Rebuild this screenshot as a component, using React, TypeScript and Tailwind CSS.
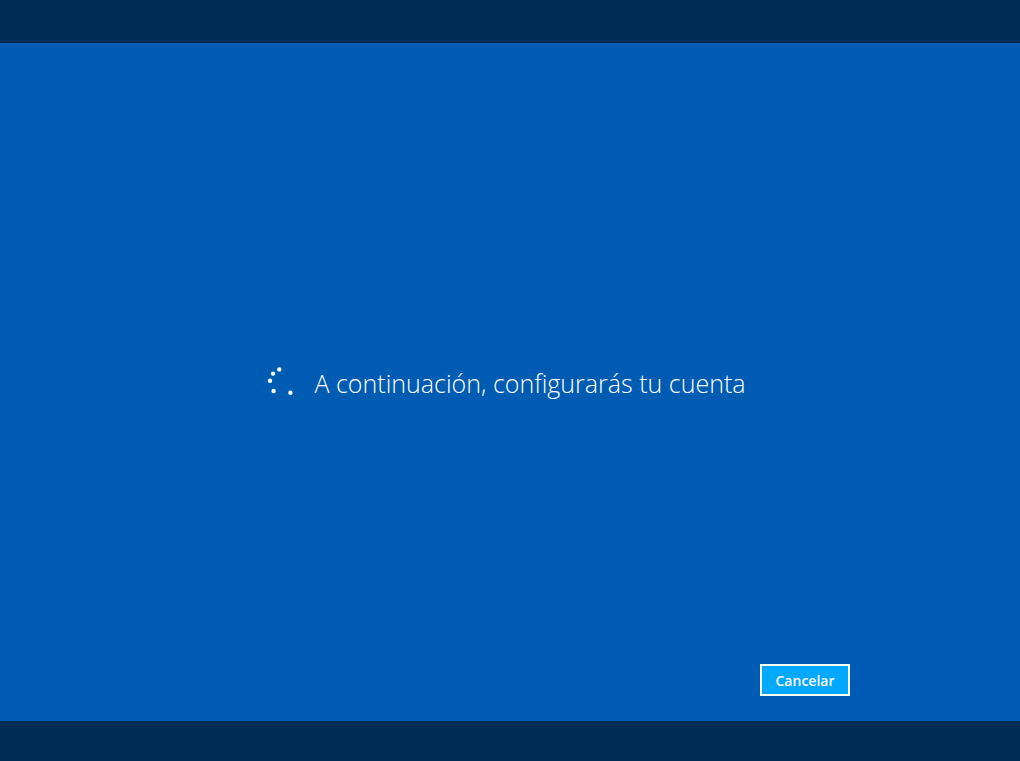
const dots = [
  { x: 13.3, y: 3.4 },
  { x: 7, y: 7.6 },
  { x: 4, y: 14.8 },
  { x: 7.6, y: 25 },
  { x: 24.4, y: 26.7 },
];

const Spinner = () => (
  <svg
    width="30"
    height="30"
    viewBox="0 0 30 30"
    fill="white"
    role="img"
    aria-label="Cargando"
    className="mb-1"
  >
    {dots.map((dot) => (
      <circle key={`${dot.x}-${dot.y}`} cx={dot.x} cy={dot.y} r="2.2" />
    ))}
  </svg>
);

const App = () => {
  return (
    <div className="flex min-h-screen flex-col bg-[#002d56] pt-[43px] pb-10 font-['Open_Sans',sans-serif] text-white">
      <main className="flex flex-1 flex-col bg-[#005cb3]">
        {/* Status message */}
        <div className="flex flex-1 items-center justify-center gap-[18px] pt-[58px] pr-2">
          <Spinner />
          <h1 className="text-[25px] leading-9 font-light">
            A continuación, configurarás tu cuenta
          </h1>
        </div>

        {/* Actions */}
        <div className="flex justify-end pr-[170px] pb-[25px]">
          <button
            type="button"
            className="h-8 w-[90px] border-2 border-white bg-[#00a8ff] pt-0.5 text-sm leading-5 font-semibold"
          >
            Cancelar
          </button>
        </div>
      </main>
    </div>
  );
};

export default App;
